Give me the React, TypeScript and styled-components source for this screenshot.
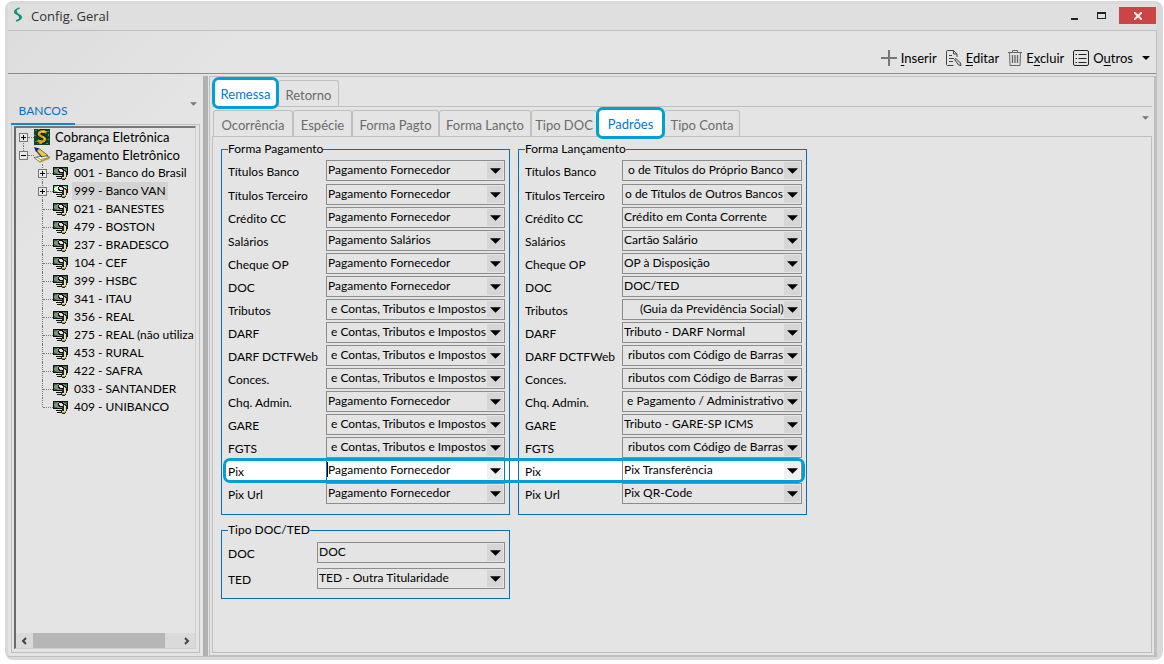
import React from 'react';
import styled, { createGlobalStyle, css } from 'styled-components';

const c = {
  face: '#e4e4e4',
  line: '#bfbfbf',
  dark: '#8c8c8c',
  blue: '#0a6ebd',
  link: '#0078d0',
  ring: '#009fd4',
  muted: '#6b6b6b',
};

const Global = createGlobalStyle`
  *, *::before, *::after { box-sizing: border-box; }
  body { margin: 0; background: #fff; }
  body, button, select { font-family: Lato, "Liberation Sans", sans-serif; font-size: 12px; line-height: 16px; color: #000; }
  button { border: 0; padding: 0; background: none; }
  ul { list-style: none; margin: 0; padding: 0; }
  svg { flex: none; }
`;

const Window = styled.div`
  margin: 1px 1px 4px 5px;
  min-height: calc(100vh - 5px);
  display: flex;
  flex-direction: column;
  border: 3px solid #d9d9d9;
  border-right-width: 6px;
  border-radius: 8px;
  background: linear-gradient(135deg, #dcdcdc 0, ${c.face} 200px);
`;

const TitleBar = styled.header`
  display: flex;
  align-items: flex-start;
  gap: 8px;
  height: 26px;
  padding: 3px 1px 0 5px;
  background: #dfdfdf;
`;

const Title = styled.h1`
  flex: 1;
  margin: 0;
  font: 400 13px/18px "Open Sans", sans-serif;
  color: #333;
`;

const WindowButton = styled.button<{ $close?: boolean }>`
  display: flex;
  align-items: center;
  justify-content: center;
  width: ${(p) => (p.$close ? 37 : 19)}px;
  height: 17px;
  background: ${(p) => (p.$close ? '#cb4545' : 'transparent')};
`;

const Body = styled.div`
  flex: 1;
  display: flex;
  flex-direction: column;
  border-top: 1px solid ${c.line};
  border-right: 1px solid ${c.line};
`;

const Toolbar = styled.div`
  display: flex;
  justify-content: flex-end;
  align-items: flex-end;
  gap: 9px;
  height: 43px;
  padding: 0 6px 6px 0;
  border-bottom: 1px solid ${c.dark};
`;

const Tool = styled.button`
  display: flex;
  align-items: center;
  gap: 4px;
  height: 18px;
  font-size: 13px;
  u { text-underline-offset: 2px; }
`;

const Split = styled.div`
  flex: 1;
  display: flex;
  margin-top: 2px;
  border-bottom: 1px solid ${c.line};
`;

const Side = styled.aside`
  display: flex;
  flex-direction: column;
  width: 195px;
  padding: 26px 3px 3px 3px;
`;

const SideHead = styled.div`
  display: flex;
  justify-content: space-between;
  height: 23px;
  box-shadow: inset 0 -1px ${c.line};
  padding-right: 3px;
`;

const SideTab = styled.button`
  width: 64px;
  padding-bottom: 3px;
  border-bottom: 2px solid #1683d8;
  color: ${c.blue};
`;

const SidePanel = styled.div`
  flex: 1;
  display: flex;
  padding: 1px 3px 3px 2px;
  border: 1px solid ${c.line};
  border-top: 0;
`;

const TreeBox = styled.div`
  flex: 1;
  display: flex;
  flex-direction: column;
  min-width: 0;
  border: 1px solid #cfcfcf;
  border-top: 2px solid #777;
  border-left: 2px solid #6b6b6b;
`;

const Tree = styled.ul`
  flex: 1;
  overflow: hidden;
  white-space: nowrap;
  padding-left: 3px;
`;

const Branch = styled.li<{ $next?: boolean }>`
  position: relative;
  font-size: 13px;
  &::before {
    content: '';
    position: absolute;
    left: 4px;
    top: ${(p) => (p.$next ? 9 : 0)}px;
    height: 9px;
    border-left: 1px dotted #777;
  }
`;

const Children = styled.ul`
  padding-left: 19px;
  font-size: 12px;
`;

const Leaf = styled.li<{ $last?: boolean }>`
  position: relative;
  &::before {
    content: '';
    position: absolute;
    left: 4px;
    top: 0;
    height: ${(p) => (p.$last ? 9 : 18)}px;
    border-left: 1px dotted #777;
  }
`;

const Row = styled.div`
  display: flex;
  align-items: center;
  height: 18px;
`;

const Toggle = styled.button`
  position: relative;
  display: flex;
  flex: none;
  width: 9px;
  height: 9px;
  background: ${c.face};
`;

const Dots = styled.span<{ $wide?: boolean }>`
  flex: none;
  width: ${(p) => (p.$wide ? 10 : 6)}px;
  margin-left: ${(p) => (p.$wide ? 5 : 0)}px;
  border-top: 1px dotted #777;
`;

const NodeName = styled.span<{ $selected?: boolean }>`
  margin-left: 3px;
  padding: 1px 2px;
  background: ${(p) => (p.$selected ? '#d4d4d4' : 'transparent')};
`;

const Scroll = styled.div`
  display: flex;
  align-items: center;
  height: 15px;
  padding: 0 5px;
  background: #dadada;
`;

const Thumb = styled.div`
  flex: 0 1 132px;
  height: 15px;
  margin: 0 auto 0 6px;
  background: #b6b6b6;
`;

const Splitter = styled.div`
  width: 5px;
  background: #b1b1b1;
`;

const Main = styled.main`
  flex: 1;
  display: flex;
  flex-direction: column;
  min-width: 0;
  margin-left: 1px;
  padding: 0 2px 2px 2px;
  border: 1px solid ${c.line};
  border-right-width: 2px;
`;

const Tabs = styled.div<{ $level: 1 | 2 }>`
  display: flex;
  align-items: flex-end;
  height: 30px;
  padding-left: 1px;
  border-bottom: 1px solid ${c.line};
`;

const Tab = styled.button<{ $w: number; $active?: boolean }>`
  width: ${(p) => p.$w}px;
  height: 26px;
  border: 1px solid ${c.line};
  border-bottom: 0;
  border-radius: 3px 3px 0 0;
  color: ${c.muted};
  font-size: 13px;
  padding-top: 3px;
  ${(p) =>
    p.$active &&
    css`
      z-index: 1;
      height: 32px;
      margin: 0 -1px -3px;
      padding: 2px 0 0;
      border: 3px solid ${c.ring};
      border-radius: 7px;
      background: #fff;
      color: ${c.link};
    `}
`;

const TabSpacer = styled.span`
  align-self: flex-start;
  margin: 9px 3px 0 auto;
  display: flex;
`;

const Page = styled.section`
  flex: 1;
  padding: 4px 8px 12px;
  border: 1px solid ${c.line};
  border-top: 0;
`;

const Groups = styled.div`
  position: relative;
  isolation: isolate;
  display: flex;
  gap: 8px;
  width: max-content;
`;

const Group = styled.fieldset<{ $short?: boolean }>`
  width: 289px;
  margin: ${(p) => (p.$short ? '7px 0 0' : '0')};
  padding: ${(p) => (p.$short ? '4px 4px 9px 6px' : '3px 4px 8px 6px')};
  border: 1px solid ${c.blue};
`;

const Legend = styled.legend`
  padding: 0;
`;

const Field = styled.div<{ $gap: number }>`
  display: flex;
  justify-content: space-between;
  align-items: center;
  margin-bottom: ${(p) => p.$gap}px;
`;

const Label = styled.label`
  padding-top: 3px;
  white-space: nowrap;
`;

const Combo = styled.div<{ $w: number; $tone?: 'focus' | 'white' }>`
  display: flex;
  width: ${(p) => p.$w}px;
  height: 21px;
  border: 1px solid ${(p) => (p.$tone === 'focus' ? c.link : c.dark)};
  background: ${(p) => (p.$tone ? '#fff' : c.face)};
`;

const Clip = styled.div<{ $end?: boolean }>`
  flex: 1;
  display: flex;
  justify-content: ${(p) => (p.$end ? 'flex-end' : 'flex-start')};
  min-width: 0;
  margin-left: 1px;
  overflow: hidden;
`;

const Select = styled.select`
  flex: none;
  appearance: none;
  height: 18px;
  padding: 0;
  border: 0;
  outline: 0;
  background: none;
`;

const Arrow = styled.span<{ $light?: boolean }>`
  display: flex;
  align-items: center;
  justify-content: center;
  width: 16px;
  margin: 1px 1px 1px 0;
  background: ${(p) => (p.$light ? '#f0f0f0' : '#d6d6d6')};
`;

const Caret = styled.span`
  width: 1px;
  height: 15px;
  margin-top: 1px;
  margin-right: -1px;
  background: #000;
`;

const RowFill = styled.div`
  position: absolute;
  z-index: -1;
  left: 2px;
  right: 2px;
  bottom: 32px;
  height: 25px;
  border-radius: 7px;
  background: #fff;
`;

const RowRing = styled(RowFill)`
  z-index: 1;
  border: 3px solid ${c.ring};
  background: none;
  pointer-events: none;
`;

const Down = ({ w = 11, color = '#000' }: { w?: number; color?: string }) => (
  <svg width={w} height={Math.ceil(w / 2)} viewBox="0 0 10 5" aria-hidden="true">
    <path d="M0 0h10L5 5z" fill={color} />
  </svg>
);

const PlusMinus = ({ open }: { open?: boolean }) => (
  <svg width="9" height="9" shapeRendering="crispEdges" aria-hidden="true">
    <rect x=".5" y=".5" width="8" height="8" fill="#e8e8e8" stroke="#777" />
    <path d={open ? 'M2 4.5h5' : 'M2 4.5h5M4.5 2v5'} stroke="#000" />
  </svg>
);

const BankIcon = ({ bright }: { bright?: boolean }) => (
  <svg width="16" height="16" viewBox="0 0 16 16" shapeRendering="crispEdges" aria-hidden="true">
    <path d="M0 2h15v8H0z" fill="#111" />
    <path d="M1 3h13v6H1z" fill={bright ? '#eef5ee' : '#7f917f'} />
    <path
      d="M1 3h3v1H2v1H1zM14 3h-3v1h2v1h1zM1 9h3V8H2V7H1z"
      fill={bright ? '#2fe02f' : '#2c6e3c'}
    />
    <path d="M6 3h4v1h1v3h-1v1H6V7H5V4h1z" fill="#111" />
    <path d="M6 4h3v1h1v2H7V6H6z" fill="#e4e4e4" />
    <path d="M2 9h8v1H2zM3 11h6v1H3zM4 13h5v1H4z" fill="#111" />
    <path d="M4 10h5v1H4zM6 12h3v1H6z" fill="#ddd" />
    <path d="M10 5h3v1h1v6h-1v2h-1v1H9v-1H8v-2h1V8h1z" fill="#222" />
    <path d="M11 6h1v1h1v5h-1v1H9v-1h2z" fill="#e0e0c0" />
    <path d="M12 7h1v5h-1v1H9v1h3v-1h1V7z" fill="#a6a024" />
  </svg>
);

const MoneyIcon = () => (
  <svg width="16" height="16" viewBox="0 0 16 16" fill="none" aria-hidden="true">
    <path d="M0 0h16v16H0z" fill="#0d4526" />
    <path
      d="M1 1h2v1H1zM13 2h2v1h-2zM1 12h2v1H1zM13 10h2v1h-2zM0 6h2v1H0zM12 14h2v1h-2zM14 5h1v2h-1zM4 0h2v1H4zM3 14h2v1H3z"
      fill="#3a8f58"
    />
    <path d="M12.500 3.500C8 1 4 3 5 5.500S12 8 11 10.500 7 13.500 3.500 11.500M9.500 1v3M6.500 11v4" stroke="#1c1600" strokeWidth="4.500" />
    <path d="M12.500 3.500C8 1 4 3 5 5.500S12 8 11 10.500 7 13.500 3.500 11.500M9.500 1v3M6.500 11v4" stroke="#cba81c" strokeWidth="2.600" />
    <path d="M11 3C8 2 6 3 6 4.500M9 8c2 1 1.500 2 1 3" stroke="#f2dc50" />
  </svg>
);

const PenIcon = () => (
  <svg width="16" height="16" viewBox="0 0 16 16" aria-hidden="true">
    <path d="M0 10.500l3-.5 12.500 0-9.500 5z" fill="#f8f8f0" stroke="#555" strokeWidth=".8" />
    <path d="M3 10l8-1.500 4.500 2-9 2z" fill="#f6f6f6" stroke="#77702a" strokeWidth=".7" />
    <path d="M2 4l3-2.500 9 7-7 1.500z" fill="#e3cf3a" stroke="#444" strokeWidth=".7" />
    <path d="M0 0l5 1.500-3 3.500z" fill="#14149a" />
    <path d="M1 2l7 8" stroke="#2a2a70" />
    <path d="M5 15l10.500-4" stroke="#b8991c" strokeWidth="1.400" />
  </svg>
);

const LogoIcon = () => (
  <svg width="10" height="15" viewBox="0 0 10 14" fill="none" stroke="#0b9277" aria-hidden="true">
    <path d="M6.500 .5C2 2 .5 4.500 3 6c3.500 1.500 4.500 2.500 3.500 5" strokeWidth="1.700" />
    <path d="M3 13.500c5-1.500 6.500-4 4-5.500C3.500 6.500 2.500 5.500 3.500 3" strokeWidth="1.700" />
  </svg>
);

const AddIcon = () => (
  <svg width="16" height="16" stroke="#777" strokeWidth="2" aria-hidden="true">
    <path d="M0 8h16M8 0v16" />
  </svg>
);

const EditIcon = () => (
  <svg width="16" height="16" viewBox="0 0 16 16" fill="none" stroke="#444" aria-hidden="true">
    <path d="M7.500 15.500h-6a1 1 0 0 1-1-1v-13a1 1 0 0 1 1-1h6l3.500 3.500v3M7.500 .5v3.500H11M3 5.500h3M3 8.500h5M3 11.500h4" />
    <path d="M8.500 9.500l1.500-1 4.500 4.500.500 2.500-2.500-.500z" fill="#ccc" />
  </svg>
);

const TrashIcon = () => (
  <svg width="14" height="16" viewBox="0 0 14 16" fill="none" stroke="#666" aria-hidden="true">
    <path d="M0 2.500h14M4.500 2.500v-2h5v2M1.500 2.500l.5 13h10l.5-13" />
    <path d="M4.500 5v8M7 5v8M9.500 5v8" strokeWidth="1.300" />
  </svg>
);

const ListIcon = () => (
  <svg width="16" height="16" viewBox="0 0 16 16" fill="none" stroke="#222" aria-hidden="true">
    <rect x=".5" y=".5" width="15" height="15" rx="1.500" />
    <path d="M2.500 4.500H4M2.500 8.500H4M2.500 12.500H4M5.500 4.500h8M5.500 8.500h8M5.500 12.500h8" />
  </svg>
);

const Chevron = ({ right }: { right?: boolean }) => (
  <svg width="6" height="8" viewBox="0 0 6 8" fill="none" stroke="#444" strokeWidth="2" aria-hidden="true">
    <path d={right ? 'M1 1l3 3-3 3' : 'M5 1L2 4l3 3'} />
  </svg>
);

const banks = [
  '001 - Banco do Brasil', '999 - Banco VAN', '021 - BANESTES', '479 - BOSTON', '237 - BRADESCO',
  '104 - CEF', '399 - HSBC', '341 - ITAU', '356 - REAL', '275 - REAL (não utiliza', '453 - RURAL',
  '422 - SAFRA', '033 - SANTANDER', '409 - UNIBANCO',
];

const names = [
  'Títulos Banco', 'Títulos Terceiro', 'Crédito CC', 'Salários', 'Cheque OP', 'DOC', 'Tributos', 'DARF',
  'DARF DCTFWeb', 'Conces.', 'Chq. Admin.', 'GARE', 'FGTS', 'Pix', 'Pix Url',
];

const supplier = 'Pagamento Fornecedor';
const bills = 'e Contas, Tributos e Impostos';
const barcode = 'ributos com Código de Barras';

const payment = [
  supplier, supplier, supplier, 'Pagamento Salários', supplier, supplier, bills, bills, bills, bills,
  supplier, bills, bills, supplier, supplier,
];

const entry = [
  'o de Títulos do Próprio Banco', 'o de Títulos de Outros Bancos', 'Crédito em Conta Corrente',
  'Cartão Salário', 'OP à Disposição', 'DOC/TED', '(Guia da Previdência Social)', 'Tributo - DARF Normal',
  barcode, barcode, 'e Pagamento / Administrativo', 'Tributo - GARE-SP ICMS', barcode,
  'Pix Transferência', 'Pix QR-Code',
];

type FieldProps = { id: string; name: string; value: string; width: number; gap: number; tone?: 'focus' | 'white' };

const ComboField = ({ id, name, value, width, gap, tone }: FieldProps) => (
  <Field $gap={gap}>
    <Label htmlFor={id}>{name}</Label>
    <Combo $w={width} $tone={tone}>
      {tone === 'focus' && <Caret />}
      <Clip $end={/^[a-z(]/.test(value)}>
        <Select id={id}>
          <option>{value}</option>
        </Select>
      </Clip>
      <Arrow $light={!!tone}><Down /></Arrow>
    </Combo>
  </Field>
);

const FieldList = ({ prefix, values, width }: { prefix: string; values: string[]; width: number }) => (
  <>
    {values.map((value, i) => (
      <ComboField
        key={names[i]}
        id={`${prefix}-${i}`}
        name={names[i]}
        value={value}
        width={width}
        gap={i === 0 ? 3 : 2}
        tone={names[i] === 'Pix' ? (prefix === 'payment' ? 'focus' : 'white') : undefined}
      />
    ))}
  </>
);

export default function App() {
  return (
    <>
      <Global />
      <Window>
        <TitleBar>
          <LogoIcon />
          <Title>Config. Geral</Title>
          <WindowButton aria-label="Minimizar">
            <svg width="7" height="9"><path d="M0 7h7v2H0z" fill="#222" /></svg>
          </WindowButton>
          <WindowButton aria-label="Maximizar">
            <svg width="9" height="7" shapeRendering="crispEdges"><path d="M0 0h9v7H0zM1 2v4h7V2z" fillRule="evenodd" fill="#222" /></svg>
          </WindowButton>
          <WindowButton $close aria-label="Fechar">
            <svg width="8" height="8" stroke="#eee" strokeWidth="2"><path d="M0 0l8 8M8 0L0 8" /></svg>
          </WindowButton>
        </TitleBar>
        <Body>
          <Toolbar>
            <Tool><AddIcon /><span><u>I</u>nserir</span></Tool>
            <Tool><EditIcon /><span><u>E</u>ditar</span></Tool>
            <Tool><TrashIcon /><span>E<u>x</u>cluir</span></Tool>
            <Tool><ListIcon /><span>O<u>u</u>tros</span></Tool>
            <Tool aria-label="Mais opções"><Down w={8} /></Tool>
          </Toolbar>
          <Split>
            <Side>
              <SideHead>
                <SideTab>BANCOS</SideTab>
                <Down w={7} color="#777" />
              </SideHead>
              <SidePanel>
                <TreeBox>
                  <Tree>
                    <Branch $next>
                      <Row>
                        <Toggle aria-label="Expandir"><PlusMinus /></Toggle>
                        <Dots />
                        <MoneyIcon />
                        <NodeName>Cobrança Eletrônica</NodeName>
                      </Row>
                    </Branch>
                    <Branch>
                      <Row>
                        <Toggle aria-label="Recolher"><PlusMinus open /></Toggle>
                        <Dots />
                        <PenIcon />
                        <NodeName>Pagamento Eletrônico</NodeName>
                      </Row>
                      <Children>
                        {banks.map((bank, i) => (
                          <Leaf key={bank} $last={i === banks.length - 1}>
                            <Row>
                              {i < 2 && <Toggle aria-label="Expandir"><PlusMinus /></Toggle>}
                              <Dots $wide={i > 1} />
                              <BankIcon bright={i === 1} />
                              <NodeName $selected={i === 1}>{bank}</NodeName>
                            </Row>
                          </Leaf>
                        ))}
                      </Children>
                    </Branch>
                  </Tree>
                  <Scroll>
                    <Chevron />
                    <Thumb />
                    <Chevron right />
                  </Scroll>
                </TreeBox>
              </SidePanel>
            </Side>
            <Splitter />
            <Main>
              <Tabs $level={1}>
                <Tab $w={67} $active>Remessa</Tab>
                <Tab $w={61}>Retorno</Tab>
              </Tabs>
              <Tabs $level={2}>
                <Tab $w={80}>Ocorrência</Tab>
                <Tab $w={59}>Espécie</Tab>
                <Tab $w={87}>Forma Pagto</Tab>
                <Tab $w={92}>Forma Lançto</Tab>
                <Tab $w={66}>Tipo DOC</Tab>
                <Tab $w={69} $active>Padrões</Tab>
                <Tab $w={76}>Tipo Conta</Tab>
                <TabSpacer><Down w={7} color="#777" /></TabSpacer>
              </Tabs>
              <Page>
                <Groups>
                  <RowFill />
                  <Group>
                    <Legend>Forma Pagamento</Legend>
                    <FieldList prefix="payment" values={payment} width={179} />
                  </Group>
                  <Group>
                    <Legend>Forma Lançamento</Legend>
                    <FieldList prefix="entry" values={entry} width={180} />
                  </Group>
                  <RowRing />
                </Groups>
                <Group $short>
                  <Legend>Tipo DOC/TED</Legend>
                  <ComboField id="type-doc" name="DOC" value="DOC" width={188} gap={5} />
                  <ComboField id="type-ted" name="TED" value="TED - Outra Titularidade" width={188} gap={0} />
                </Group>
              </Page>
            </Main>
          </Split>
        </Body>
      </Window>
    </>
  );
}
